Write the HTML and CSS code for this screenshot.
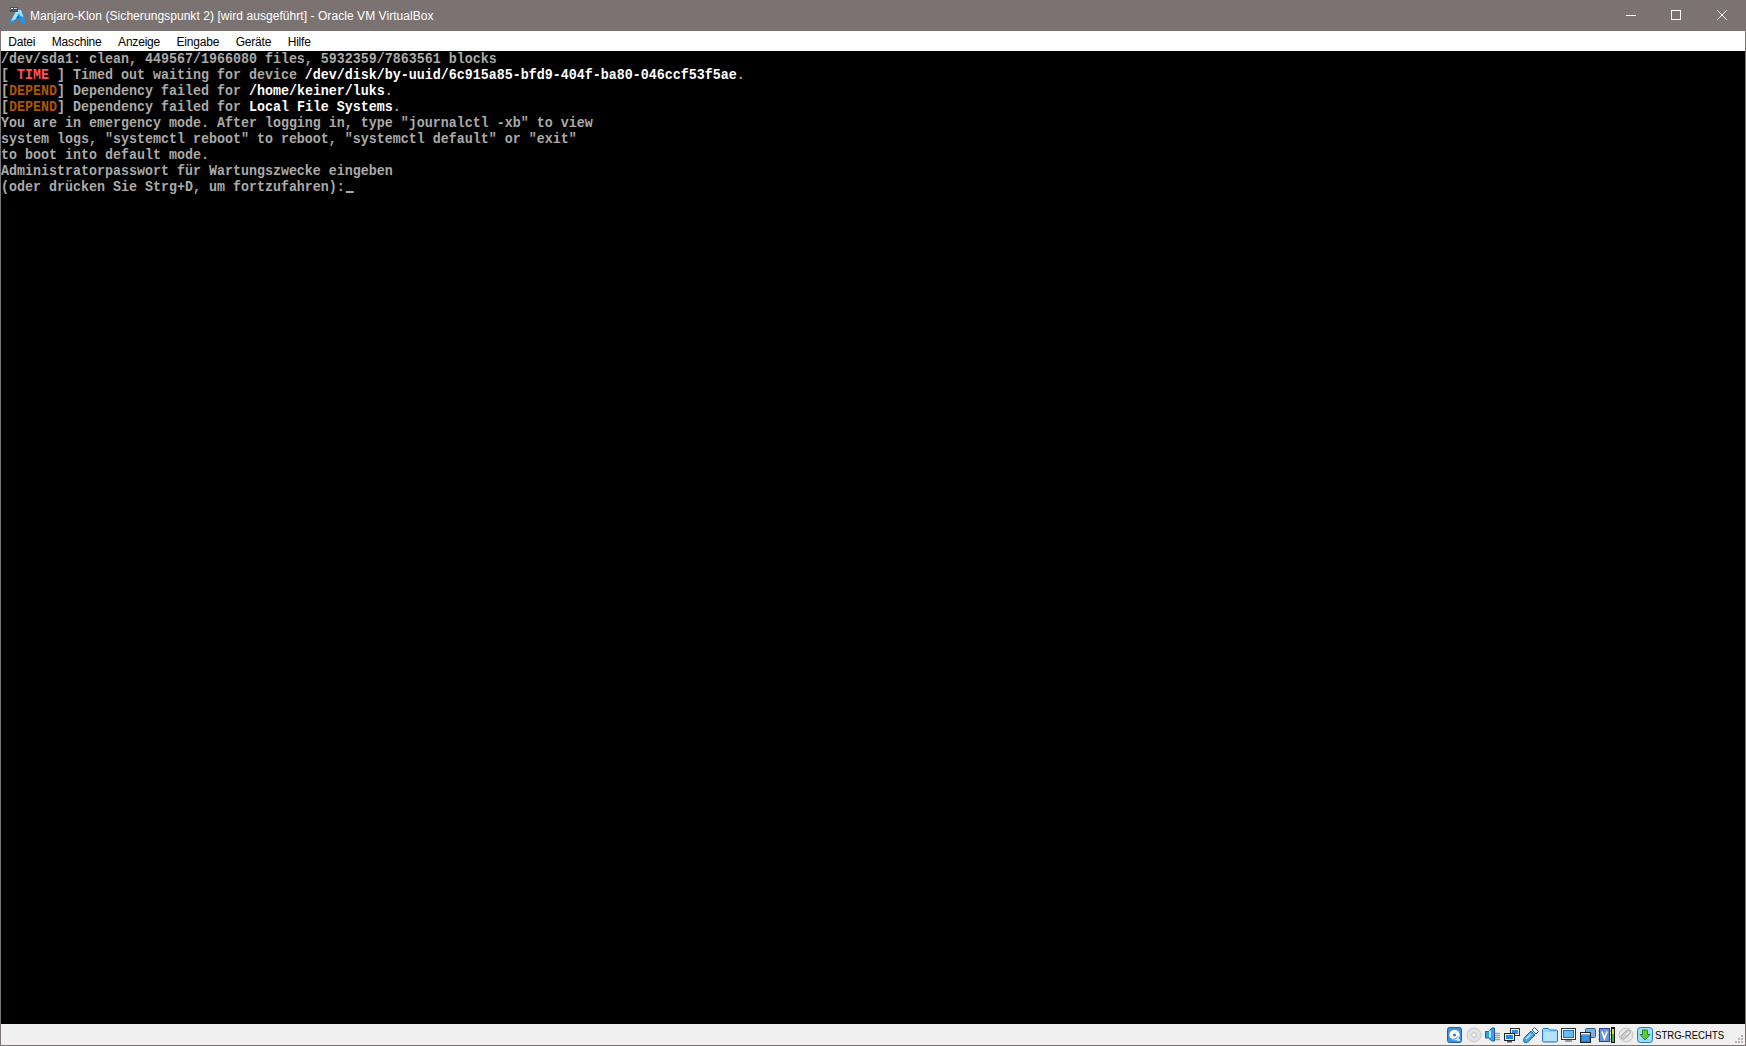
FILE: index.html
```html
<!DOCTYPE html>
<html lang="de">
<head>
<meta charset="utf-8">
<title>Manjaro-Klon (Sicherungspunkt 2) [wird ausgeführt] - Oracle VM VirtualBox</title>
<link rel="stylesheet" href="styles.css">
</head>
<body>
<div class="window">
  <header class="titlebar">
    <svg class="appicon" viewBox="0 0 17 17" width="17" height="17">
      <path d="M0 16 7.5 3h4.5L17 16h-4.5l-1.8-4H6.2l-2 4z" fill="#1e96e8"/>
      <path d="M7.5 3H12l2.5 7-3-1-1.5-3-3.5 6.5L2 14z" fill="#9fe0fb"/>
      <path d="M8.3 9.5h1.6l.6 1.7H7.5z" fill="#0d5fb0"/>
      <rect x="1" y="0" width="8" height="5" fill="#4a5560"/>
      <rect x="2" y="1" width="2" height="1" fill="#fff"/><rect x="5" y="1" width="3" height="1" fill="#c9ced4"/>
    </svg>
    <span class="title">Manjaro-Klon (Sicherungspunkt 2) [wird ausgeführt] - Oracle VM VirtualBox</span>
    <div class="winbtns">
      <svg class="winbtn" viewBox="0 0 46 31" width="46" height="31"><path d="M19 15.5h10" stroke="#fff" fill="none"/></svg>
      <svg class="winbtn" viewBox="0 0 46 31" width="46" height="31"><rect x="18.5" y="10.5" width="9" height="9" stroke="#fff" fill="none"/></svg>
      <svg class="winbtn" viewBox="0 0 46 31" width="46" height="31"><path d="M18 10l10 10M28 10 18 20" stroke="#fff" fill="none"/></svg>
    </div>
  </header>
  <nav class="menubar">
    <span>Datei</span><span>Maschine</span><span>Anzeige</span><span>Eingabe</span><span>Geräte</span><span>Hilfe</span>
  </nav>
  <main class="screen">
    <div class="console">
      <div class="line">/dev/sda1: clean, 449567/1966080 files, 5932359/7863561 blocks</div>
      <div class="line"><span>[ </span><span class="red">TIME</span><span> ] Timed out waiting for device </span><span class="white">/dev/disk/by-uuid/6c915a85-bfd9-404f-ba80-046ccf53f5ae</span><span>.</span></div>
      <div class="line"><span>[</span><span class="orange">DEPEND</span><span>] Dependency failed for </span><span class="white">/home/keiner/luks</span><span>.</span></div>
      <div class="line"><span>[</span><span class="orange">DEPEND</span><span>] Dependency failed for </span><span class="white">Local File Systems</span><span>.</span></div>
      <div class="line">You are in emergency mode. After logging in, type "journalctl -xb" to view</div>
      <div class="line">system logs, "systemctl reboot" to reboot, "systemctl default" or "exit"</div>
      <div class="line">to boot into default mode.</div>
      <div class="line">Administratorpasswort für Wartungszwecke eingeben</div>
      <div class="line"><span>(oder drücken Sie Strg+D, um fortzufahren):</span><i class="cursor"></i></div>
    </div>
  </main>
  <footer class="statusbar">
    <div class="icons">
      <svg viewBox="0 0 16 16" width="16" height="16"><rect x=".5" y=".5" width="14" height="15" rx="2" fill="#3f93dd" stroke="#1a62ad"/><circle cx="7.5" cy="8" r="5.2" fill="#fff"/><circle cx="7.5" cy="8" r="1.6" fill="#2f7fc9"/><path d="M3.5 11.5c3 1.5 6 .5 7.5-2" stroke="#2f7fc9" fill="none"/><rect x="10" y="12" width="3" height="2" fill="#d4ecfb"/></svg>
      <svg viewBox="0 0 16 16" width="16" height="16"><circle cx="8" cy="8" r="7" fill="#e2e2e2" stroke="#c6c6c6"/><circle cx="8" cy="8" r="2.4" fill="#f3f3f3" stroke="#c4c4c4"/></svg>
      <svg viewBox="0 0 16 16" width="16" height="16"><path d="M10 5h5v9h-5z" fill="#dcdcdc"/><path d="M10 6.500h5M10 8.500h5M10 10.500h5M10 12.500h5" stroke="#9a9a9a"/><path d="M.5 4.500h3L7 1h2.500v13H7l-3.500-3h-3z" fill="#37a0ea" stroke="#1b5da6"/><path d="M5 3.500v7" stroke="#b8e4fb" stroke-width="2"/></svg>
      <svg viewBox="0 0 16 16" width="16" height="16"><rect x="6.500" y="1.500" width="9" height="7" fill="#e8eef5" stroke="#333"/><rect x="8" y="3" width="6" height="4" fill="#2c8fe0"/><rect x=".5" y="6.500" width="10" height="7" fill="#f4f4f4" stroke="#222"/><rect x="2" y="8" width="7" height="4" fill="#1f8be0"/><rect x="3" y="14" width="5" height="1.500" fill="#555"/></svg>
      <svg viewBox="0 0 16 16" width="16" height="16"><path d="M1 15c-.8-1.500-.5-3 .5-4.500L8 4l4 4-6.500 6.500C4 15.700 2.500 16 1 15z" fill="#3ea6ee" stroke="#1c66b4"/><path d="M3 12 8 7" stroke="#c9ecfd" stroke-width="1.500"/><path d="M9 3l2.500-2.500 4 4L13 7z" fill="#f2f6fa" stroke="#1c66b4"/></svg>
      <svg viewBox="0 0 16 16" width="16" height="16"><path d="M.5 14V2.500L1.500 1.500h5l1 1.500h7l1 1V14l-1 1h-13z" fill="#8fd4fa" stroke="#2377c2"/><path d="M1.500 5h13v9h-13z" fill="#b4e4fd"/></svg>
      <svg viewBox="0 0 16 16" width="16" height="16"><rect x=".5" y="1.500" width="14" height="11" fill="#fbfbfb" stroke="#333"/><rect x="2.500" y="3.500" width="10" height="7" fill="#66bdf3" stroke="#1671c4"/><rect x="4" y="13" width="7" height="2" fill="#9a9a9a"/></svg>
      <svg viewBox="0 0 16 16" width="16" height="16"><rect x="5.500" y="1.500" width="10" height="9" rx="1" fill="#7caee6" stroke="#3a5a8c"/><rect x=".5" y="5.500" width="10" height="10" fill="#1b79d6" stroke="#222"/><rect x="2" y="8" width="7" height="6" fill="#2f95ec"/><rect x="1" y="6" width="9" height="1.500" fill="#f2f2f2"/></svg>
      <svg viewBox="0 0 16 16" width="16" height="16"><rect x=".5" y="1.500" width="10" height="13" fill="#6f92d8" stroke="#27418f"/><path d="M-.5 4h1M-.5 8h1M-.5 12h1M10.500 4h1M10.500 8h1M10.500 12h1" stroke="#27418f"/><path d="M3 4.500l2.500 7 2.500-7" fill="none" stroke="#fff" stroke-width="1.600"/><rect x="12.500" y=".5" width="3" height="15" fill="#111" stroke="#111"/><rect x="13" y="2" width="2" height="5" fill="#e4dd20"/><rect x="13" y="7" width="2" height="8" fill="#2fb82f"/></svg>
      <svg viewBox="0 0 16 16" width="16" height="16"><circle cx="8" cy="8" r="7" fill="#e6e6e6" stroke="#c4c4c4"/><path d="M3.500 11.500c-1-1-.5-2.500.5-3.500l4-4c1-1 2.500-1.300 3.500-.3s.8 2.500-.2 3.500l-4 4c-1 1-2.800 1.300-3.800.3z" fill="#cfcfcf" stroke="#a6a6a6"/><path d="M8.500 7.500l2.500-2.500" stroke="#f5f5f5"/></svg>
      <svg viewBox="0 0 16 16" width="16" height="16"><rect x=".5" y=".5" width="15" height="15" rx="3" fill="#9edcfb" stroke="#1f7cc4"/><path d="M5.500 3h5v4.500H13L8 13 3 7.500h2.500z" fill="#5fc93a" stroke="#2c8a1e"/></svg>
    </div>
    <span class="hostkey"><span class="hostkey-text">STRG-RECHTS</span></span>
    <svg class="grip" viewBox="0 0 9 9" width="9" height="9"><path d="M6 0h2v2H6zM3 3h2v2H3zM6 3h2v2H6zM0 6h2v2H0zM3 6h2v2H3zM6 6h2v2H6z" fill="#b4b4b4"/></svg>
  </footer>
</div>
</body>
</html>
```
FILE: styles.css
```css
html, body { margin: 0; height: 100%; }
body { overflow: hidden; background: #000; }
.window { box-sizing: border-box; display: flex; flex-direction: column; height: 1046px; width: 1746px; font-family: "Liberation Sans", sans-serif; border: 1px solid #7a7372; border-top: 0; }
.titlebar { flex: none; height: 31px; background: #7a7372; display: flex; align-items: center; color: #fff; font-size: 12px; padding-left: 8px; }
.appicon { flex: none; margin-right: 4px; }
.title { flex: 1; letter-spacing: .06px; }
.winbtns { display: flex; }
.menubar { flex: none; height: 20px; background: #fff; display: flex; gap: 16.5px; align-items: center; font-size: 12px; letter-spacing: -.2px; padding: 1px 0 0 7.3px; box-sizing: border-box; color: #000; }
.screen { flex: 1; min-height: 0; background: #000; overflow: hidden; }
.console { width: 1990px; font: bold 15.38px/16px "Liberation Mono", monospace; color: #aaa; transform: scaleX(.8667); transform-origin: 0 0; }
.line { height: 16px; white-space: pre; }
.white { color: #fff; }
.red { color: #ff5555; }
.orange { color: #aa5500; }
.cursor { display: inline-block; width: 9px; height: 2px; margin-left: 1px; background: #aaa; vertical-align: -2px; }
.statusbar { flex: none; height: 21px; background: #f0f0f0; display: flex; justify-content: flex-end; align-items: center; font-size: 12px; color: #000; }
.icons { display: flex; gap: 3px; }
.icons svg { display: block; overflow: visible; }
.hostkey { display: block; width: 70px; margin-left: 2px; overflow: visible; white-space: nowrap; }
.hostkey-text { display: inline-block; font-size: 11px; transform: scaleX(.87); transform-origin: 0 50%; }
.grip { flex: none; margin: 9px 1px 0 10px; }
```
